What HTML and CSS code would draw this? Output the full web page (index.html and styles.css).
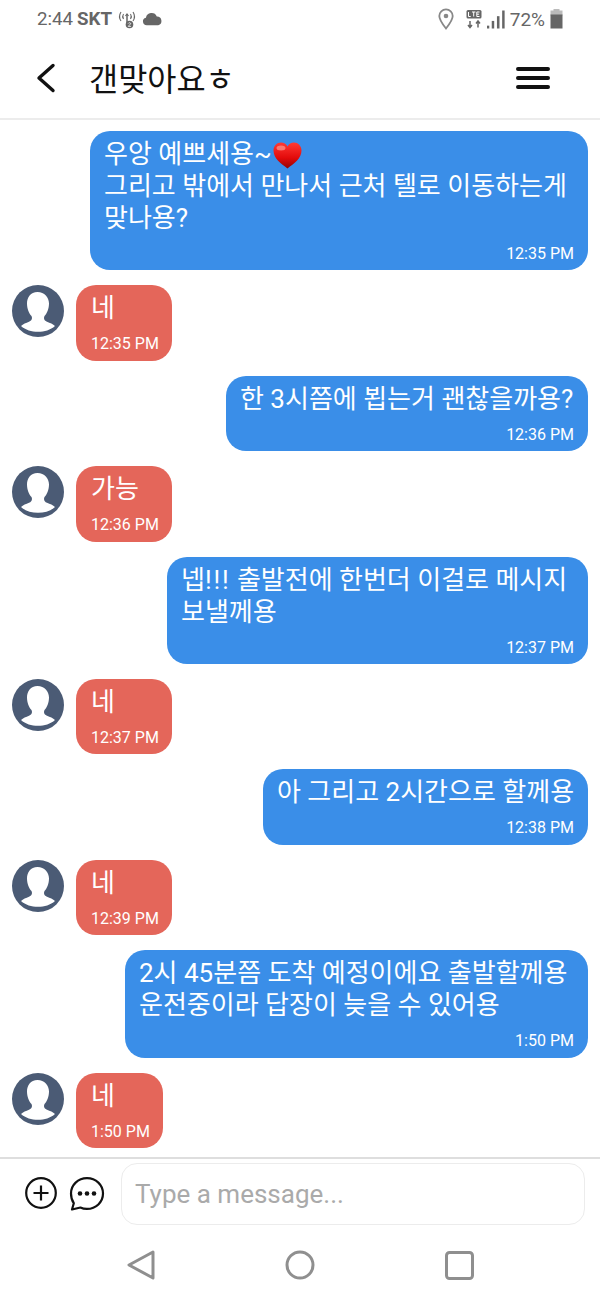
FILE: index.html
```html
<!DOCTYPE html>
<html lang="ko">
<head>
<meta charset="utf-8">
<title>갠맞아요ㅎ</title>
<link rel="stylesheet" href="styles.css">
</head>
<body>
<div class="app">
  <div class="status">
    <div class="status-left">
      <span class="clock">2:44</span><b class="carrier">SKT</b>
      <svg class="ic-hotspot" width="20" height="20" viewBox="0 0 20 20" fill="none" stroke="#666" stroke-width="1.1"><path d="M4 3C2 6 2 9 4 12M6.500 5C5.500 6.500 5.500 8.500 6.500 10M16 3c2 3 2 6 0 9M13.500 5c1 1.500 1 3.500 0 5"/><path d="M10 5v9" stroke-width="1.500"/><path d="M8.500 7 10 5l1.500 2" stroke-width="1.200"/><circle cx="12.500" cy="15.500" r="3.800" fill="#666" stroke="none"/><path d="M11.200 14.500c.5-1.100 2.500-1 2.500.2 0 1-2.300 1.500-2.400 2.700h2.600" stroke="#fff" stroke-width=".8"/></svg>
      <svg class="ic-cloud" width="21" height="14" viewBox="0 0 22 14"><path fill="#666" d="M5 13.500a4 4 0 0 1-.9-7.900A6 6 0 0 1 15.500 4.300 4.700 4.700 0 0 1 17 13.500z"/></svg>
    </div>
    <div class="status-right">
      <svg class="ic-pin" width="16" height="22" viewBox="0 0 16 22" fill="none" stroke="#888" stroke-width="1.800"><path d="M8 20.500C4 15.500 1.300 12 1.300 8a6.700 6.700 0 0 1 13.400 0c0 4-2.700 7.500-6.700 12.500z"/><circle cx="8" cy="8" r="2.300" fill="#888" stroke="none"/></svg>
      <svg class="ic-lte" width="16" height="20" viewBox="0 0 16 20"><rect x=".5" y="1" width="15" height="8.500" rx="1.500" fill="#666"/><path d="M2.500 3v4.500h2.200M6 3h3.400M7.700 3v4.500M13.500 3h-2.700v4.500h2.700M10.800 5.200h2.300" fill="none" stroke="#fff" stroke-width="1"/><path d="M4 12v6.500M2 16l2 2.500L6 16M12 18.500V12M10 14.500 12 12l2 2.500" fill="none" stroke="#666" stroke-width="1.500"/></svg>
      <svg class="ic-signal" width="18" height="19" viewBox="0 0 19 19" fill="#666"><rect x="0" y="16" width="2.400" height="3"/><rect x="5" y="11" width="2.600" height="8"/><rect x="10.500" y="6" width="2.700" height="13"/><rect x="16" y="0" width="2.600" height="19"/></svg>
      <span class="batt-text">72%</span>
      <svg class="ic-batt" width="13" height="20" viewBox="0 0 13 20"><rect x="3.500" y="0" width="6" height="2" fill="#bbb"/><rect x=".5" y="1.500" width="12" height="5" fill="#bbb"/><rect x=".5" y="5.500" width="12" height="14" fill="#666"/></svg>
    </div>
  </div>

  <header class="topbar">
    <svg class="ic-back" width="20" height="30" viewBox="0 0 20 30" fill="none" stroke="#111" stroke-width="3.400" stroke-linecap="round" stroke-linejoin="round"><path d="M17 2.500 3 15l14 12.500"/></svg>
    <h1 class="title">갠맞아요ㅎ</h1>
    <svg class="ic-menu" width="34" height="24" viewBox="0 0 34 24" fill="none" stroke="#111" stroke-width="4" stroke-linecap="round"><path d="M2 3h30M2 12h30M2 21h30"/></svg>
  </header>

  <main class="chat">
    <div class="msg out">
      <div class="bubble out w498">
        <p class="text">우앙 예쁘세용~<svg class="heart" width="29" height="27" viewBox="0 0 29 27"><defs><linearGradient id="hg" x1="0" y1="0" x2="0" y2="1"><stop offset="0" stop-color="#ff3a34"/><stop offset=".6" stop-color="#e20a0a"/><stop offset="1" stop-color="#8f0404"/></linearGradient></defs><path fill="url(#hg)" d="M14.500 26.500C8 21.500.5 16.500.5 8.500.5 4 4 .5 8 .5c2.800 0 5.200 1.500 6.500 4 1.300-2.500 3.700-4 6.500-4 4 0 7.500 3.500 7.500 8 0 8-7.500 13-14 18z"/><ellipse cx="8" cy="6" rx="4.500" ry="2.500" fill="#ff9a90" opacity=".7"/></svg><br>그리고 밖에서 만나서 근처 텔로 이동하는게<br>맞나용?</p>
        <time class="time">12:35 PM</time>
      </div>
    </div>

    <div class="msg in">
      <svg class="avatar" width="52" height="52" viewBox="0 0 52 52"><use href="#person"/></svg>
      <div class="bubble in w96"><p class="text">네</p><time class="time">12:35 PM</time></div>
    </div>

    <div class="msg out">
      <div class="bubble out w362"><p class="text">한 3시쯤에 뵙는거 괜찮을까용?</p><time class="time">12:36 PM</time></div>
    </div>

    <div class="msg in">
      <svg class="avatar" width="52" height="52" viewBox="0 0 52 52"><use href="#person"/></svg>
      <div class="bubble in w96"><p class="text">가능</p><time class="time">12:36 PM</time></div>
    </div>

    <div class="msg out">
      <div class="bubble out w421"><p class="text">넵<span class="bang">!!!</span> 출발전에 한번더 이걸로 메시지<br>보낼께용</p><time class="time">12:37 PM</time></div>
    </div>

    <div class="msg in">
      <svg class="avatar" width="52" height="52" viewBox="0 0 52 52"><use href="#person"/></svg>
      <div class="bubble in w96"><p class="text">네</p><time class="time">12:37 PM</time></div>
    </div>

    <div class="msg out">
      <div class="bubble out w325"><p class="text">아 그리고 2시간으로 할께용</p><time class="time">12:38 PM</time></div>
    </div>

    <div class="msg in">
      <svg class="avatar" width="52" height="52" viewBox="0 0 52 52"><use href="#person"/></svg>
      <div class="bubble in w96"><p class="text">네</p><time class="time">12:39 PM</time></div>
    </div>

    <div class="msg out">
      <div class="bubble out w463"><p class="text">2시 45분쯤 도착 예정이에요 출발할께용<br>운전중이라 답장이 늦을 수 있어용</p><time class="time">1:50 PM</time></div>
    </div>

    <div class="msg in">
      <svg class="avatar" width="52" height="52" viewBox="0 0 52 52"><use href="#person"/></svg>
      <div class="bubble in w87"><p class="text">네</p><time class="time">1:50 PM</time></div>
    </div>
  </main>

  <footer class="composer">
    <svg class="ic-plus" width="34" height="34" viewBox="0 0 34 34" fill="none" stroke="#111" stroke-width="2.200"><circle cx="17" cy="17" r="14.800"/><path d="M17 9.500v15M9.500 17h15"/></svg>
    <svg class="ic-more" width="36" height="36" viewBox="0 0 36 36" fill="none" stroke="#111" stroke-width="2.200" stroke-linejoin="round"><path d="M18 2.200c9 0 16 6.800 16 15.300 0 8.600-7 15.400-16 15.400-2.500 0-4.500-.4-6.600-1.400L3 33.500l1.800-6.300C3 24.700 2 21.300 2 17.500 2 9 9 2.200 18 2.200z"/><g fill="#111" stroke="none"><circle cx="11" cy="17.500" r="2.300"/><circle cx="18" cy="17.500" r="2.300"/><circle cx="25" cy="17.500" r="2.300"/></g></svg>
    <div class="input">Type a message...</div>
  </footer>

  <nav class="navbar">
    <svg width="28" height="30" viewBox="0 0 28 30" fill="none" stroke="#8f8f8f" stroke-width="3" stroke-linejoin="round"><path d="M26 2 2 15l24 13z"/></svg>
    <svg width="30" height="30" viewBox="0 0 30 30" fill="none" stroke="#8f8f8f" stroke-width="3"><circle cx="15" cy="15" r="13"/></svg>
    <svg width="29" height="29" viewBox="0 0 29 29" fill="none" stroke="#8f8f8f" stroke-width="3"><rect x="1.500" y="1.500" width="26" height="26" rx="3"/></svg>
  </nav>
</div>

<svg class="defs" width="0" height="0">
  <symbol id="person" viewBox="0 0 52 52">
    <circle cx="26" cy="26" r="26" fill="#4b5b75"/>
    <path fill="#fff" d="M25.500 7C18.500 7 15 12.500 15 18.500c0 5 2 10 4.500 12.500 1.200 2.500 0 4.800-2.500 5.800-3 1.300-6 2.200-8 4.200C13.500 45 19.500 46.800 26 46.800S38.500 45 43 41c-2-2-5-2.900-8-4.200-2.500-1-3.700-3.300-2.500-5.800 2.500-2.500 4.500-7.500 4.500-12.500C37 12.500 32.500 7 25.500 7z"/>
  </symbol>
</svg>
</body>
</html>
```

FILE: styles.css
```css
* { box-sizing: border-box; }
html, body { margin: 0; padding: 0; background: #fff; }
body { width: 600px; height: 1300px; overflow: hidden; font-family: Roboto, "Noto Sans CJK KR", sans-serif; }
.app { width: 600px; height: 1300px; display: flex; flex-direction: column; }

.status { height: 38px; padding: 0 36px 0 37px; display: flex; justify-content: space-between; align-items: center; color: #666; font-size: 18.700px; }
.status-left, .status-right { display: flex; align-items: center; }
.clock { margin-right: 4px; }
.carrier { font-weight: 700; margin-right: 5px; }
.ic-cloud { margin-left: 5px; }
.ic-lte { margin-left: 12px; }
.ic-signal { margin-left: 5px; }
.batt-text { margin-left: 5px; font-size: 19px; }
.ic-batt { margin-left: 5px; margin-right: 1px; }

.topbar { height: 82px; padding: 0 50px 0 36px; display: flex; align-items: center; border-bottom: 2px solid #ececec; }
.ic-back { flex: none; }
.title { flex: 1; margin: -2px 0 0 33px; font-size: 31.700px; line-height: 40px; font-weight: 400; color: #111; font-family: "Noto Sans CJK KR", sans-serif; }

.chat { flex: none; height: 1038px; padding: 11px 12px 0; display: flex; flex-direction: column; gap: 15px; overflow: hidden; }
.msg { display: flex; align-items: flex-start; }
.msg.out { justify-content: flex-end; }
.avatar { flex: none; margin-right: 12px; }
.bubble { padding: 7px 14px 6.400px 14px; border-radius: 20px; color: #fff; }
.bubble.out { background: #3a8ee8; }
.bubble.in { background: #e4665a; padding-left: 15px; }
.text { margin: 0; font-size: 26px; line-height: 32px; white-space: nowrap; }
.bang { letter-spacing: 1.800px; }
.heart { vertical-align: -6px; margin-left: 1.500px; }
.time { display: block; margin-top: 10px; text-align: right; font-size: 16px; line-height: 20px; white-space: nowrap; }
.w498 { width: 498px; }
.w96 { width: 96px; }
.w87 { width: 87px; }
.w362 { width: 362px; }
.w421 { width: 421px; }
.w325 { width: 325px; }
.w463 { width: 463px; }

.composer { height: 76px; margin-top: -1px; padding: 4px 15px 0 24px; border-top: 2px solid #dedede; display: flex; align-items: flex-start; }
.ic-plus { flex: none; margin-top: 13px; }
.ic-more { flex: none; margin-left: 11px; margin-top: 13px; }
.input { flex: 1; height: 62px; margin-left: 16px; padding-left: 13px; display: flex; align-items: center; border: 1px solid #ececec; border-radius: 16px; color: #aaa; font-size: 26px; }

.navbar { flex: 1; padding: 0 126px 3px 127px; display: flex; align-items: center; justify-content: space-between; }
.defs { position: absolute; }
```
